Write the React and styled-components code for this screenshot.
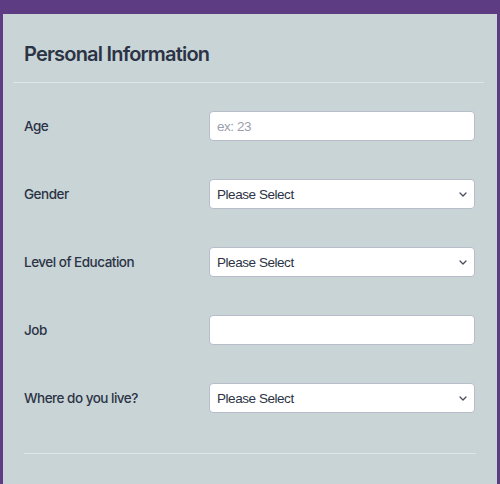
import React from "react";
import styled, { createGlobalStyle } from "styled-components";

const GlobalStyle = createGlobalStyle`
    html, body {
        margin: 0;
        padding: 0;
        background: #5e3c84;
        font-family: Inter, "Noto Sans", sans-serif;
    }
`;

const chevron =
    "url(\"data:image/svg+xml;utf8,<svg xmlns='http://www.w3.org/2000/svg' width='8' height='5' viewBox='0 0 8 5'><path d='M1 1 4 4 7 1' fill='none' stroke='%23474d5c' stroke-width='1.3' stroke-linecap='round' stroke-linejoin='round'/></svg>\")";

const rows = [
    { label: "Age", kind: "input", placeholder: "ex: 23" },
    { label: "Gender", kind: "select" },
    { label: "Level of Education", kind: "select" },
    { label: "Job", kind: "input" },
    { label: "Where do you live?", kind: "select" },
];

const App = () => {
    return (
        <Page>
            <GlobalStyle />
            <Card>
                <Header>
                    <h2 className="title">Personal Information</h2>
                </Header>
                <List>
                    {rows.map((row) => (
                        <Row key={row.label}>
                            <Label>{row.label}</Label>
                            {row.kind === "select" ? (
                                <Select defaultValue="">
                                    <option value="">Please Select</option>
                                </Select>
                            ) : (
                                <Input type="text" placeholder={row.placeholder} />
                            )}
                        </Row>
                    ))}
                </List>
                <Divider />
            </Card>
        </Page>
    );
};

const Page = styled.div`
    width: 500px;
    height: 484px;
    overflow: hidden;
    padding-top: 14px;
    padding-left: 3px;
    box-sizing: border-box;
`;

const Card = styled.section`
    width: 494px;
    height: 480px;
    background: #c8d4d6;
    color: #2c3345;
`;

const Header = styled.div`
    margin: 0 13px 0 10px;
    padding: 28px 0 16px 11px;
    border-bottom: 1px solid #dfe6e8;

    .title {
        margin: 0;
        font-size: 20px;
        line-height: 24px;
        font-weight: 600;
        letter-spacing: -0.8px;
        color: #2c3345;
    }
`;

const List = styled.div`
    display: flex;
    flex-direction: column;
    padding: 9px 22px 0 21px;
`;

const Row = styled.div`
    height: 68px;
    display: grid;
    grid-template-columns: 185px 1fr;
    align-items: center;
`;

const Label = styled.label`
    font-size: 13.5px;
    font-weight: 500;
    letter-spacing: -0.5px;
    color: #2c3345;
`;

const fieldBase = `
    box-sizing: border-box;
    width: 266px;
    height: 30px;
    border: 1px solid #b8bdc9;
    border-radius: 4px;
    background-color: #ffffff;
    padding: 0 7px;
    font-family: "Liberation Sans", Arial, sans-serif;
    font-size: 13.5px;
    letter-spacing: -0.45px;
    color: #2c3345;
    outline: none;
`;

const Input = styled.input`
    ${fieldBase}
    &::placeholder {
        color: #9aa0ad;
    }
`;

const Select = styled.select`
    ${fieldBase}
    appearance: none;
    -webkit-appearance: none;
    background-image: ${chevron};
    background-repeat: no-repeat;
    background-position: right 7px center;
`;

const Divider = styled.div`
    margin: 21px 21px 0 21px;
    height: 1px;
    background: #dfe6e8;
`;

export default App;
